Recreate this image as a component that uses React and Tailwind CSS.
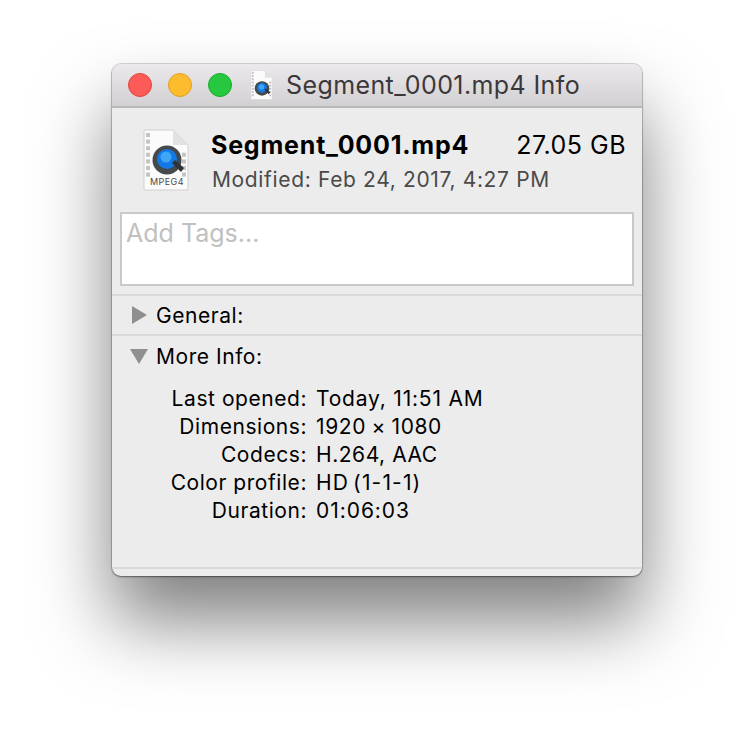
const FileIcon = ({ className, small }) => {
  const holes = small ? [0, 1, 2, 3, 4, 5, 6, 7] : [0, 1, 2, 3, 4, 5, 6];
  const cy = small ? 38 : 31;
  return (
    <svg viewBox="0 0 46 62" className={className}>
      <path d="M1 1H30L45 16V61H1Z" fill="#fbfbfb" stroke="#cfcfcf" strokeWidth="1" />
      <path d="M30 1V16H45Z" fill="#e2e2e2" />
      {holes.map((i) => (
        <rect key={i} x="3" y={4 + i * 6.6} width="4" height="4" fill="#c4c4c4" />
      ))}
      {holes.slice(3).map((i) => (
        <rect key={i} x="39" y={4 + i * 6.6} width="4" height="4" fill="#c4c4c4" />
      ))}
      <circle cx="24" cy={cy} r={small ? 15 : 14.5} fill="#44494d" />
      <circle cx="24" cy={cy - 1} r="10" fill="#1279e6" />
      <circle cx="23" cy={cy - 3} r="5.5" fill="#3fa6f5" />
      <path d={`M29 ${cy + 3}L38 ${cy + 12}L41 ${cy + 8}L32 ${cy}Z`} fill="#2f3336" />
      {small ? null : (
        <text x="24" y="56" textAnchor="middle" fontSize="9" letterSpacing="0.4" fill="#4a4a4a" fontFamily="Inter, sans-serif">MPEG4</text>
      )}
    </svg>
  );
};

const Row = ({ label, value, valueClass }) => (
  <div className="flex h-7 items-center">
    <span className="w-[195px] text-right">{label}</span>
    <span className={`ml-[9px] ${valueClass}`}>{value}</span>
  </div>
);

export default function App() {
  return (
    <div className="h-[736px] w-[754px] overflow-hidden bg-white pl-[112px] pt-[64px] font-['Inter','Liberation_Sans',sans-serif] text-[21px] tracking-[0.55px] text-black">
      <div className="flex h-[512px] w-[530px] flex-col overflow-hidden rounded-[9px] bg-[#ececec] shadow-[0_45px_74px_rgba(0,0,0,0.5),0_0_0_1px_rgba(0,0,0,0.14),0_1px_2px_rgba(0,0,0,0.4)]">
        <div className="flex h-11 shrink-0 items-center border-b-2 border-[#b9b8b9] bg-gradient-to-b from-[#ebe9eb] to-[#d2d0d2] pl-4">
          <span className="size-[24px] rounded-full border border-[#e1463f] bg-[#fc5b57]" />
          <span className="ml-4 size-[24px] rounded-full border border-[#dfa023] bg-[#fdbc2e]" />
          <span className="ml-4 size-[24px] rounded-full border border-[#1aab29] bg-[#27c83f]" />
          <FileIcon small className="ml-[18px] h-[30px] w-[23px]" />
          <span className="ml-[13px] mt-[2px] text-[25px] tracking-[0.4px] text-[#3b383b]">Segment_0001.mp4 Info</span>
        </div>
        <div className="flex h-[104px] shrink-0 pl-[31px] pt-[21px]">
          <FileIcon className="h-[62px] w-[46px] shrink-0" />
          <div className="ml-[22px] w-[415px]">
            <div className="flex items-center justify-between text-[25px] leading-8">
              <span className="font-bold tracking-[0.8px]">Segment_0001.mp4</span>
              <span className="font-normal tracking-[0.5px]">27.05 GB</span>
            </div>
            <div className="ml-[1px] mt-[5px] text-[21px] leading-7 tracking-[0.65px] text-[#4a4a4a]">Modified: Feb 24, 2017, 4:27 PM</div>
          </div>
        </div>
        <div className="ml-2 mr-2 h-[74px] shrink-0 border-2 border-[#c9c9c9] bg-white pl-[4px] pt-[1px] text-[25px] leading-[37px] tracking-normal text-[#c0c0c0]">Add Tags...</div>
        <div className="mt-2 flex h-[40px] shrink-0 items-center border-t-2 border-[#d9d9d9] pl-[20px]">
          <svg viewBox="0 0 15 18" className="h-[18px] w-[15px]"><path d="M0 0L15 9L0 18Z" fill="#8f8f8f" /></svg>
          <span className="ml-[9px] mt-[1px]">General:</span>
        </div>
        <div className="flex h-[42px] shrink-0 items-center border-t-2 border-[#d9d9d9] pl-[18px]">
          <svg viewBox="0 0 18 15" className="h-[15px] w-[18px]"><path d="M0 0H18L9 15Z" fill="#8f8f8f" /></svg>
          <span className="ml-[8px] mt-[2px]">More Info:</span>
        </div>
        <div className="mt-[8px] shrink-0 pt-[1px]">
          <Row label="Last opened:" value="Today, 11:51 AM" valueClass="tracking-[0.8px]" />
          <Row label="Dimensions:" value="1920 × 1080" valueClass="tracking-[0.6px] [word-spacing:-1px]" />
          <Row label="Codecs:" value="H.264, AAC" valueClass="tracking-[0.55px]" />
          <Row label="Color profile:" value="HD (1-1-1)" valueClass="tracking-[1.15px] [word-spacing:-3px]" />
          <Row label="Duration:" value="01:06:03" valueClass="tracking-[0.95px]" />
        </div>
        <div className="mt-auto h-[9px] shrink-0 border-t-2 border-[#d9d9d9]" />
      </div>
    </div>
  );
}
